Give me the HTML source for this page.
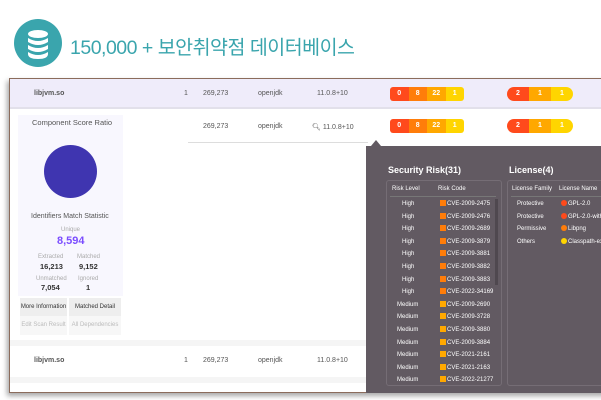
<!DOCTYPE html>
<html><head><meta charset="utf-8"><style>
*{margin:0;padding:0;box-sizing:border-box}
body{width:601px;height:400px;overflow:hidden;background:#fff;font-family:"Liberation Sans","Noto Sans CJK KR",sans-serif;position:relative;font-size:7px;color:#555}
.a{position:absolute;white-space:nowrap}
.bar{position:absolute;height:14px;display:flex;border-radius:3px;overflow:hidden}
.bar div{flex:1;color:#fff;font-size:7px;font-weight:bold;text-align:center;line-height:14px}
.pill{border-radius:7px}
.r1{background:#ff4a1c}.r2{background:#ff7d0a}.r3{background:#ffa800}.r4{background:#ffd500}
.btn{position:absolute;background:#eee;font-size:6px;text-align:center;line-height:19px}
.pop{position:absolute;left:366px;top:146px;width:240px;height:247px;background:#625a62}
.box{position:absolute;top:34px;height:206px;border:1px solid #756d75;border-radius:3px}
.w{color:#fff}
.sq{display:inline-block;width:6px;height:6px;margin-right:1px;vertical-align:-1px}
</style></head><body>
<svg class="a" style="left:14px;top:19px" width="48" height="48"><circle cx="24" cy="24" r="24" fill="#3aa5ad"/>
<g fill="#fff"><ellipse cx="24" cy="15" rx="10" ry="4"/><path d="M14 19 v4 q10 6 20 0 v-4 q-10 6 -20 0z"/><path d="M14 26 v4 q10 6 20 0 v-4 q-10 6 -20 0z"/><path d="M14 33 v2 q0 5 10 5 q10 0 10 -5 v-2 q-10 6 -20 0z"/></g></svg>
<div class="a" style="left:70px;top:31px;font-size:19.5px;color:#3aa5ad;letter-spacing:-0.5px">150,000 + 보안취약점 데이터베이스</div>

<div class="a" style="left:9px;top:78px;width:600px;height:315px;border:1px solid #8b6c5c;border-right:none;box-shadow:-2px 3px 5px rgba(0,0,0,.35);background:#fff"></div>
<div class="a" style="left:10px;top:79px;width:591px;height:30px;background:#efecfa;border-bottom:2px solid #e2e0ea"></div>
<div class="a" style="left:188px;top:142px;width:180px;height:1px;background:#ddd"></div>
<div class="a" style="left:10px;top:340px;width:591px;height:6px;background:#f5f5f5"></div>
<div class="a" style="left:10px;top:377px;width:591px;height:6px;background:#f5f5f5"></div>

<div class="a" style="left:34px;top:90px;font-weight:bold">libjvm.so</div>
<div class="a" style="left:184px;top:90px">1</div>
<div class="a" style="left:203px;top:90px">269,273</div>
<div class="a" style="left:258px;top:90px">openjdk</div>
<div class="a" style="left:317px;top:90px">11.0.8+10</div>
<div class="bar" style="left:390px;top:87px;width:74px"><div class="r1">0</div><div class="r2">8</div><div class="r3">22</div><div class="r4">1</div></div>
<div class="bar pill" style="left:507px;top:87px;width:66px"><div class="r1">2</div><div class="r3">1</div><div class="r4">1</div></div>

<div class="a" style="left:203px;top:123px">269,273</div>
<div class="a" style="left:258px;top:123px">openjdk</div>
<div class="a" style="left:312px;top:123px">🔍︎ 11.0.8+10</div>
<div class="bar" style="left:390px;top:119px;width:74px"><div class="r1">0</div><div class="r2">8</div><div class="r3">22</div><div class="r4">1</div></div>
<div class="bar pill" style="left:507px;top:119px;width:66px"><div class="r1">2</div><div class="r3">1</div><div class="r4">1</div></div>

<div class="a" style="left:18px;top:115px;width:105px;height:181px;background:#f8f7fe"></div>
<div class="a" style="left:32px;top:118px;font-size:7.5px">Component Score Ratio</div>
<div class="a" style="left:44px;top:145px;width:53px;height:53px;border-radius:50%;background:#3f35b0"></div>
<div class="a" style="left:31px;top:213px;font-size:7px">Identifiers Match Statistic</div>
<div class="a" style="left:61px;top:227px;font-size:6px;color:#aaa">Unique</div>
<div class="a" style="left:57px;top:235px;font-size:11px;font-weight:bold;color:#7b4dff">8,594</div>
<div class="a" style="left:38px;top:254px;font-size:6px;color:#aaa">Extracted</div>
<div class="a" style="left:77px;top:254px;font-size:6px;color:#aaa">Matched</div>
<div class="a" style="left:40px;top:262px;font-weight:bold;font-size:7.5px;color:#333">16,213</div>
<div class="a" style="left:79px;top:262px;font-weight:bold;font-size:7.5px;color:#333">9,152</div>
<div class="a" style="left:36px;top:276px;font-size:6px;color:#aaa">Unmatched</div>
<div class="a" style="left:78px;top:276px;font-size:6px;color:#aaa">Ignored</div>
<div class="a" style="left:41px;top:283px;font-weight:bold;font-size:7.5px;color:#333">7,054</div>
<div class="a" style="left:86px;top:283px;font-weight:bold;font-size:7.5px;color:#333">1</div>
<div class="btn" style="left:20px;top:298px;width:47px;color:#333">More Information</div>
<div class="btn" style="left:69px;top:298px;width:52px;color:#333">Matched Detail</div>
<div class="btn" style="left:20px;top:316px;width:47px;background:#f7f7f7;color:#bbb">Edit Scan Result</div>
<div class="btn" style="left:69px;top:316px;width:52px;background:#f7f7f7;color:#bbb">All Dependencies</div>

<div class="a" style="left:34px;top:357px;font-weight:bold">libjvm.so</div>
<div class="a" style="left:184px;top:357px">1</div>
<div class="a" style="left:203px;top:357px">269,273</div>
<div class="a" style="left:258px;top:357px">openjdk</div>
<div class="a" style="left:317px;top:357px">11.0.8+10</div>

<div class="a" style="left:371px;top:140px;width:0;height:0;border-left:5px solid transparent;border-right:5px solid transparent;border-bottom:6px solid #625a62"></div>
<div class="pop">
<div class="a w" style="left:22px;top:19px;font-size:9px;font-weight:bold">Security Risk(31)</div>
<div class="a w" style="left:143px;top:19px;font-size:9px;font-weight:bold">License(4)</div>
<div class="box" style="left:20px;width:116px"></div>
<div class="box" style="left:141px;width:110px"></div>
<div class="a w" style="left:26px;top:40px;font-size:6px">Risk Level</div>
<div class="a w" style="left:72px;top:40px;font-size:6px">Risk Code</div>
<div class="a w" style="left:146px;top:40px;font-size:6px">License Family</div>
<div class="a w" style="left:193px;top:40px;font-size:6px">License Name</div>
<div class="a" style="left:24px;top:50px;width:106px;height:1px;background:#777"></div>
<div class="a" style="left:145px;top:50px;width:100px;height:1px;background:#777"></div>
<div class="a" style="left:129px;top:53px;width:3px;height:86px;background:#4f484f"></div>
<div class="a w" style="left:0;top:0;font-size:6px;line-height:12.6px">
<div class="a" style="left:31px;top:52px">
<div style="padding-left:5px">High</div><div style="padding-left:5px">High</div><div style="padding-left:5px">High</div><div style="padding-left:5px">High</div><div style="padding-left:5px">High</div><div style="padding-left:5px">High</div><div style="padding-left:5px">High</div><div style="padding-left:5px">High</div><div>Medium</div><div>Medium</div><div>Medium</div><div>Medium</div><div>Medium</div><div>Medium</div><div>Medium</div></div>
<div class="a" style="left:74px;top:52px">
<div><span class="sq r2"></span>CVE-2009-2475</div><div><span class="sq r2"></span>CVE-2009-2476</div><div><span class="sq r2"></span>CVE-2009-2689</div><div><span class="sq r2"></span>CVE-2009-3879</div><div><span class="sq r2"></span>CVE-2009-3881</div><div><span class="sq r2"></span>CVE-2009-3882</div><div><span class="sq r2"></span>CVE-2009-3883</div><div><span class="sq r2"></span>CVE-2022-34169</div><div><span class="sq r3"></span>CVE-2009-2690</div><div><span class="sq r3"></span>CVE-2009-3728</div><div><span class="sq r3"></span>CVE-2009-3880</div><div><span class="sq r3"></span>CVE-2009-3884</div><div><span class="sq r3"></span>CVE-2021-2161</div><div><span class="sq r3"></span>CVE-2021-2163</div><div><span class="sq r3"></span>CVE-2022-21277</div></div>
<div class="a" style="left:151px;top:52px"><div>Protective</div><div>Protective</div><div>Permissive</div><div>Others</div></div>
<div class="a" style="left:195px;top:52px"><div><span class="sq r1" style="border-radius:3px"></span>GPL-2.0</div><div><span class="sq r1" style="border-radius:3px"></span>GPL-2.0-with-c</div><div><span class="sq r2" style="border-radius:3px"></span>Libpng</div><div><span class="sq r4" style="border-radius:3px"></span>Classpath-exc</div></div>
</div>
</div>
</body></html>
